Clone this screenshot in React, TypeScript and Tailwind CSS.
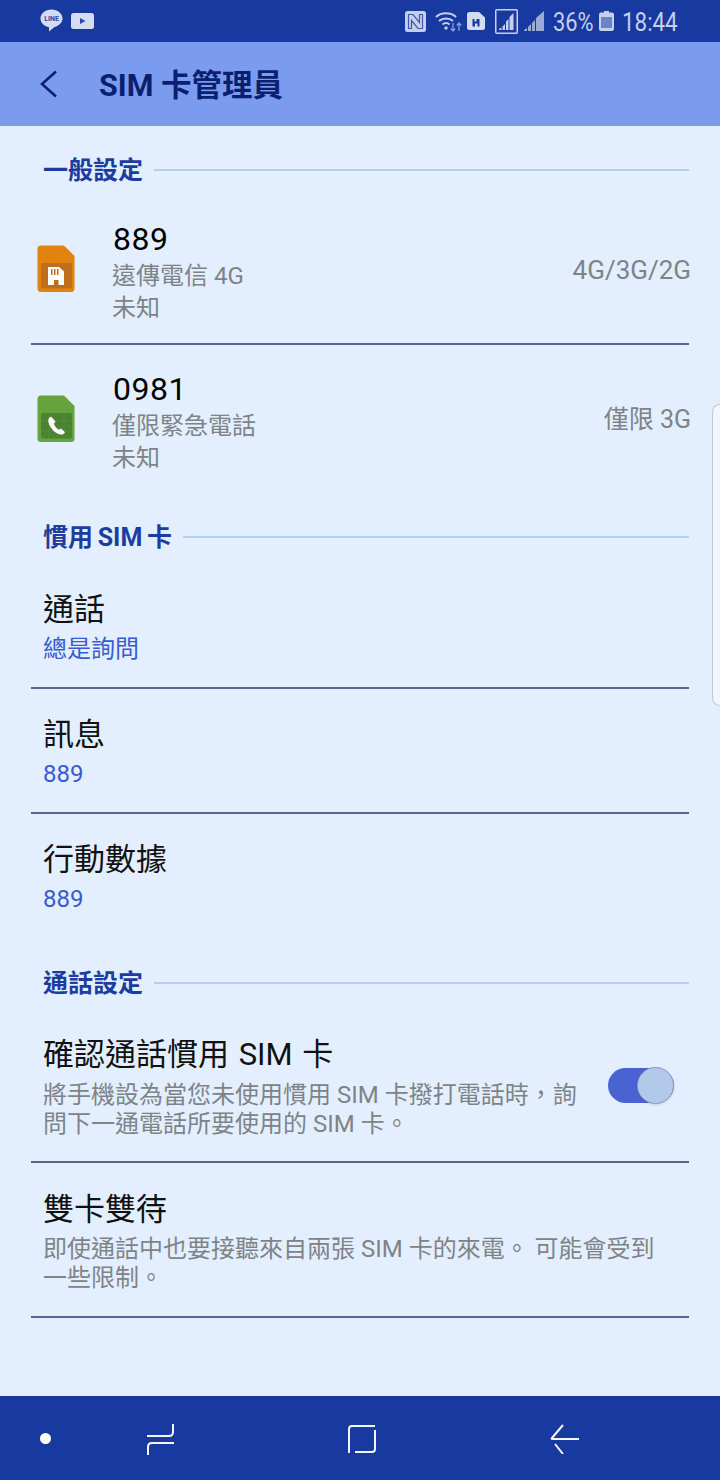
import React from 'react';

const font = { fontFamily: 'Roboto, "Noto Sans CJK TC", sans-serif' };

function SectionHeader({ title }: { title: string }) {
  return (
    <div className="flex h-[26px] items-center pl-[43px] pr-[31px]">
      <span className="pt-[2px] text-[25px] leading-[26px] font-bold whitespace-nowrap [word-spacing:-1.5px] text-[#1c3d9f]">{title}</span>
      <div className="ml-[11px] h-[2px] flex-1 bg-[#b4cfef]" />
    </div>
  );
}

function Divider() {
  return <div className="mx-[31px] h-[2px] bg-[#5a6590]" />;
}

function SimIcon({ body, chip, kind }: { body: string; chip: string; kind: 'card' | 'phone' }) {
  return (
    <svg width="38" height="48" viewBox="0 0 38 48" className="shrink-0">
      <path d="M4 0.5H27L37.5 11V43.5Q37.5 47 34 47H4Q0.5 47 0.5 43.5V4Q0.5 0.5 4 0.5Z" fill={body} />
      <rect x="4" y="18" width="31" height="25.500" rx="2" fill={chip} />
      <path d="M4 26H35M4 36H35M12 18V43.500M27 18V43.500" stroke={body} strokeOpacity="0.35" strokeWidth="0.8" />
      {kind === 'card' ? (
        <path
          fillRule="evenodd"
          d="M11 22H22L27 26.500V40H21.500V35H17V40H11ZM14 24V30H15.500V24ZM17 24V30H18.500V24ZM20 24V30H21.500V24Z"
          fill="#fff"
        />
      ) : (
        <path
          d="M14 21.500C11.500 22.500 10.800 25 11.600 27.800C13 32.800 17.300 37.500 22.300 39.300C24.800 40.200 27 39 28 37.200L24 33.500L21.700 34.800C19.500 33.400 17.800 31.200 16.900 28.800L18.500 26.500Z"
          fill="#fff"
        />
      )}
    </svg>
  );
}

function SimRow({ icon, name, carrier, mode }: { icon: React.ReactNode; name: React.ReactNode; carrier: string; mode: React.ReactNode }) {
  return (
    <div className="flex h-[148px] items-center pl-[37px] pr-[29px]">
      <div className="w-[75px]">{icon}</div>
      <div className="flex flex-1 flex-col pt-[5px]">
        <span className="ml-[1px] text-[32px] leading-[38px] tracking-[0.5px] text-black">{name}</span>
        <span className="mt-[2px] text-[24px] leading-[32px] text-[#7f8388]">{carrier}</span>
        <span className="text-[24px] leading-[32px] text-[#7f8388]">未知</span>
      </div>
      {mode}
    </div>
  );
}

function ValueRow({ title, value }: { title: string; value: string }) {
  return (
    <div className="flex h-[123px] flex-col justify-center pl-[43px] pr-[43px] pt-[2px]">
      <span className="text-[31px] leading-[44px] text-[#111]">{title}</span>
      <span className="mt-[1px] text-[24px] leading-[32px] text-[#3a5ad0]">{value}</span>
    </div>
  );
}

function StatusBar() {
  return (
    <div className="flex h-[42px] items-center bg-[#18399f] pl-[40px] pr-[43px] text-[#c5d0ea]">
      <svg width="23" height="23" viewBox="0 0 23 23" className="mt-[-1px]">
        <path d="M11.500 0.500C5.200 0.500 0.500 4.500 0.500 9.500C0.500 13.800 4 17.300 9 18.200V22.500L14.500 18C19 16.800 22.500 13.500 22.500 9.500C22.500 4.500 17.800 0.500 11.500 0.500Z" fill="#d3dcf0" />
        <text x="11.500" y="12" textAnchor="middle" fontSize="7" fontWeight="700" fill="#2b49a6">LINE</text>
      </svg>
      <svg width="23" height="16" viewBox="0 0 23 16" className="ml-[8px]">
        <rect width="23" height="16" rx="2.500" fill="#d3dcf0" />
        <path d="M9 5L14.500 8L9 11Z" fill="#2b49a6" />
      </svg>
      <div className="flex-1" />
      <svg width="21" height="21" viewBox="0 0 21 21">
        <rect width="21" height="21" rx="2.500" fill="#c5d0ea" />
        <path d="M3.500 4V17.500H6.500V9.500L13 17.500H17.500V3.500H14.500V11.500L8 3.500H3.500Z" fill="none" stroke="#3e58ad" strokeWidth="1.200" />
      </svg>
      <svg width="28" height="22" viewBox="0 0 28 22" fill="none" className="ml-[9px]">
        <path d="M1 7C6 2 16 2 21 7M4 11C8 7.500 14 7.500 18 11M7.500 14.500C9.500 12.800 12.500 12.800 14.500 14.500" stroke="#c5d0ea" strokeWidth="2" />
        <circle cx="11" cy="18" r="1.700" fill="#c5d0ea" />
        <path d="M18 13V21M15.800 18.500L18 21L20.200 18.500" stroke="#8fa2d6" strokeWidth="1.200" />
        <path d="M24 21V13M21.800 15.500L24 13L26.200 15.500" stroke="#8fa2d6" strokeWidth="1.200" />
      </svg>
      <svg width="18" height="18" viewBox="0 0 18 18" className="ml-[4px]">
        <path fillRule="evenodd" d="M2.500 0H12L18 5.500V15.500Q18 18 15.500 18H2.500Q0 18 0 15.500V2.500Q0 0 2.500 0ZM5.500 7V14.500H8V11.500H10.500V14.500H12.500V7H9.500V9.500H7.500V7Z" fill="#d3dcf0" />
      </svg>
      <svg width="23" height="25" viewBox="0 0 23 25" className="ml-[10px]">
        <rect x="0.750" y="0.750" width="21.500" height="23.500" rx="1" fill="none" stroke="#c5d0ea" strokeWidth="1.500" />
        <path d="M4 21H6.500V18.500L4 20ZM7.500 21H10V15L7.500 17.500ZM11 21H13.500V10L11 12.500ZM14.500 21H18.500V4L14.500 8Z" fill="#c5d0ea" />
      </svg>
      <svg width="22" height="22" viewBox="0 0 22 22" className="ml-[5px]">
        <path d="M1 21H4V18L1 20ZM5 21H8V14L5 17ZM9 21H12V10L9 13ZM13 21H21V1L13 8Z" fill="#c5d0ea" fillOpacity="0.75" />
      </svg>
      <span className="ml-[8px] w-[40px] origin-left scale-x-[0.84] pt-[2px] text-[26px] leading-[42px] whitespace-nowrap">36%</span>
      <svg width="15" height="20" viewBox="0 0 15 20" className="ml-[6px]">
        <path d="M5 0H10V1.500H13Q15 1.500 15 3.500V18Q15 20 13 20H2Q0 20 0 18V3.500Q0 1.500 2 1.500H5Z" fill="#c5d0ea" />
        <rect x="2" y="6" width="11" height="11" fill="#6c83c6" />
      </svg>
      <span className="ml-[8px] w-[55px] origin-left scale-x-[0.86] pt-[2px] text-[26px] leading-[42px] whitespace-nowrap">18:44</span>
    </div>
  );
}

function NavBar() {
  return (
    <div className="relative flex h-[84px] items-center bg-[#18399f] pl-[40px]">
      <div className="h-[11px] w-[11px] rounded-full bg-white" />
      <svg width="30" height="32" viewBox="0 0 30 32" fill="none" stroke="#f4f6fc" strokeWidth="2" className="ml-[95px] mt-[2px]">
        <path d="M1 13H23Q27 13 27 9V1M28 20H6Q2 20 2 24V32" />
      </svg>
      <svg width="30" height="30" viewBox="0 0 30 30" fill="none" stroke="#f4f6fc" strokeWidth="2" className="ml-[171px] mt-[2px]">
        <path d="M28 2H5Q2 2 2 5V29M28 6V25Q28 28 25 28H8" />
      </svg>
      <svg width="30" height="30" viewBox="0 0 30 30" fill="none" stroke="#f4f6fc" strokeWidth="2" className="ml-[173px] mt-[2px]">
        <path d="M13 1L2 14Q1 15 3 15H29M5 20L13 30" />
      </svg>
    </div>
  );
}

export default function App() {
  return (
    <div className="relative flex h-[1480px] w-[720px] flex-col overflow-hidden bg-[#e3efff]" style={font}>
      <StatusBar />

      <div className="flex h-[84px] items-center bg-[#7b9bee] pl-[40px]">
        <svg width="18" height="28" viewBox="0 0 18 28" fill="none" stroke="#0a1f6e" strokeWidth="2.500">
          <path d="M16 1.500L2 14L16 26.500" />
        </svg>
        <span className="ml-[41px] mt-[3px] text-[30.500px] font-bold text-[#0b1f70]">SIM 卡管理員</span>
      </div>

      <div className="flex flex-1 flex-col pt-[31px]">
        <SectionHeader title="一般設定" />
        <div className="mt-[12px]" />
        <SimRow
          icon={<SimIcon body="#e2830f" chip="#bf6c1c" kind="card" />}
          name="889"
          carrier="遠傳電信 4G"
          mode={<span className="mt-[2px] text-[26px] leading-[32px] text-[#7f8388]">4G/3G/2G</span>}
        />
        <Divider />
        <SimRow
          icon={<SimIcon body="#67a33c" chip="#4c8332" kind="phone" />}
          name="0981"
          carrier="僅限緊急電話"
          mode={<span className="mt-[2px] text-[25px] leading-[32px] text-[#7f8388]">僅限 3G</span>}
        />

        <div className="mt-[31px]" />
        <SectionHeader title="慣用 SIM 卡" />
        <div className="mt-[14px]" />
        <ValueRow title="通話" value="總是詢問" />
        <Divider />
        <ValueRow title="訊息" value="889" />
        <Divider />
        <ValueRow title="行動數據" value="889" />

        <div className="mt-[33px]" />
        <SectionHeader title="通話設定" />

        <div className="mt-[14px] flex h-[151px] items-center pl-[43px] pr-[46px]">
          <div className="flex flex-1 flex-col">
            <span className="text-[31px] leading-[46px] [word-spacing:2px] text-[#111]">確認通話慣用 SIM 卡</span>
            <span className="mt-[3px] w-[540px] text-[24px] leading-[29px] text-[#7f8388]">
              將手機設為當您未使用慣用 SIM 卡撥打電話時，詢問下一通電話所要使用的 SIM 卡。
            </span>
          </div>
          <div className="relative h-[35px] w-[66px] rounded-full bg-[#4a63d3]">
            <div className="absolute top-[-1px] right-0 h-[37px] w-[37px] rounded-full border border-[#8f9db8] bg-[#b3c9ea] shadow-sm" />
          </div>
        </div>
        <Divider />
        <div className="flex h-[153px] flex-col justify-center pl-[43px] pr-[43px]">
          <span className="text-[31px] leading-[48px] text-[#111]">雙卡雙待</span>
          <span className="mt-[1px] w-[620px] text-[24px] leading-[29px] text-[#7f8388]">
            即使通話中也要接聽來自兩張 SIM 卡的來電。 可能會受到一些限制。
          </span>
        </div>
        <Divider />
      </div>

      <NavBar />

      <div className="absolute top-[404px] right-0 h-[302px] w-[8px] rounded-l-[8px] border-y border-l border-[#c0c8d6] bg-[#f3f6fd]" />
    </div>
  );
}
